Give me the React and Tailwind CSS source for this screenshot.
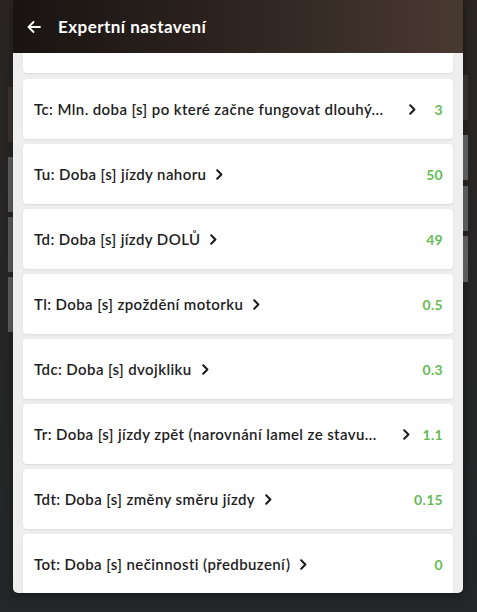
import React from "react";

const items = [
  { label: "Tc: Mln. doba [s] po které začne fungovat dlouhý...", value: "3", cut: true },
  { label: "Tu: Doba [s] jízdy nahoru", value: "50" },
  { label: "Td: Doba [s] jízdy DOLŮ", value: "49" },
  { label: "Tl: Doba [s] zpoždění motorku", value: "0.5" },
  { label: "Tdc: Doba [s] dvojkliku", value: "0.3" },
  { label: "Tr: Doba [s] jízdy zpět (narovnání lamel ze stavu...", value: "1.1", cut: true },
  { label: "Tdt: Doba [s] změny směru jízdy", value: "0.15" },
  { label: "Tot: Doba [s] nečinnosti (předbuzení)", value: "0" },
];

function Chevron({ cut }) {
  return (
    <svg width="7" height="11" viewBox="0 0 7 11" className={cut ? "shrink-0 ml-[26px]" : "shrink-0 ml-[10px]"}>
      <path d="M1.2 1.2 L5.4 5.5 L1.2 9.8" fill="none" stroke="#1b1b1b" strokeWidth="2" strokeLinecap="round" strokeLinejoin="round" />
    </svg>
  );
}

function Row({ label, value, cut }) {
  return (
    <div className="h-[60px] shrink-0 bg-white rounded-[4px] shadow-[0_1px_2px_rgba(0,0,0,0.08)] flex items-center pl-[11px] pr-[10px]">
      <div className="flex-1 min-w-0 flex items-center">
        <span className="whitespace-nowrap overflow-hidden text-[15px] font-semibold tracking-[0.4px] text-[#1e1e1e]">{label}</span>
        <Chevron cut={cut} />
      </div>
      <span className="shrink-0 ml-[12px] text-[14px] font-bold tracking-[0.3px] text-[#66bb55]">{value}</span>
    </div>
  );
}

export default function App() {
  return (
    <div
      className="w-[477px] h-[612px] overflow-hidden flex bg-gradient-to-b from-[#2a2524] to-[#232728]"
      style={{ fontFamily: "Lato, 'Open Sans', sans-serif" }}
    >
      <div className="w-[13px] shrink-0 flex flex-col items-end pt-[87px]">
        <div className="w-[5px] h-[55px] bg-[#3a3532]" />
        <div className="w-[5px] h-[55px] mt-[15px] bg-[#5f5f5f]" />
        <div className="w-[5px] h-[55px] mt-[5px] bg-[#5c5c5c]" />
        <div className="w-[5px] h-[55px] mt-[5px] bg-[#5e5e5e]" />
      </div>

      <div className="w-[450px] h-[593px] shrink-0 flex flex-col bg-[#eeeeee] rounded-b-[5px] overflow-hidden shadow-[0_2px_8px_rgba(0,0,0,0.4)]">
        <div className="h-[53px] shrink-0 flex items-center bg-gradient-to-r from-[#191412] via-[#2e2420] to-[#493a31]">
          <svg width="14" height="12" viewBox="0 0 14 12" className="ml-[14px]">
            <path d="M13 6 H1.5 M6.5 1 L1.5 6 L6.5 11" fill="none" stroke="#ffffff" strokeWidth="1.8" strokeLinecap="round" strokeLinejoin="round" />
          </svg>
          <span className="ml-[17px] text-[17px] font-bold tracking-[0.45px] text-white">Expertní nastavení</span>
        </div>
        <div className="flex-1 min-h-0 overflow-hidden flex flex-col px-[10px] gap-[5px]">
          <div className="h-[20px] shrink-0 bg-white rounded-b-[4px] shadow-[0_1px_2px_rgba(0,0,0,0.08)] mb-[1px]" />
          {items.map((it) => (
            <Row key={it.label} label={it.label} value={it.value} cut={it.cut} />
          ))}
        </div>
      </div>

      <div className="w-[14px] shrink-0 flex flex-col items-start pt-[75px]">
        <div className="w-[5px] h-[45px] bg-[#353130]" />
        <div className="w-[5px] h-[45px] mt-[15px] bg-[#5c5c5c]" />
        <div className="w-[5px] h-[45px] mt-[6px] bg-[#5a5a5a]" />
        <div className="w-[5px] h-[46px] mt-[5px] bg-[#5c5c5c]" />
      </div>
    </div>
  );
}
